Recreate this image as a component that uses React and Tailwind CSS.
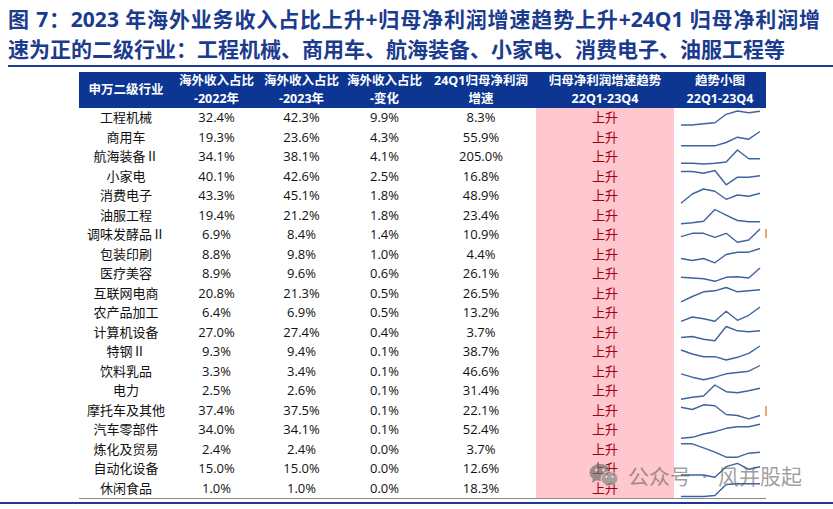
import React from "react";

const rows = [
  ["工程机械", "32.4%", "42.3%", "9.9%", "8.3%", [17, 17, 15.7, 14.7, 6.3, 3, 4.7, 3.3]],
  ["商用车", "19.3%", "23.6%", "4.3%", "55.9%", [17.8, 17.8, 17.8, 17.8, 14.5, 9.2, 11.2, 3.5]],
  ["航海装备Ⅱ", "34.1%", "38.1%", "4.1%", "205.0%", [16.3, 16.3, 17, 16.3, 15, 3, 11.7, 11.7]],
  ["小家电", "40.1%", "42.6%", "2.5%", "16.8%", [4.5, 4.5, 6.2, 3.5, 17.8, 10.2, 10.2, 8.8]],
  ["消费电子", "43.3%", "45.1%", "1.8%", "48.9%", [17.3, 8, 3, 5.3, 13.3, 9, 10.3, 7.3]],
  ["油服工程", "19.4%", "21.2%", "1.8%", "23.4%", [17.8, 16.8, 15.2, 3.5, 9.2, 14.5, 15.8, 15.8]],
  ["调味发酵品Ⅱ", "6.9%", "8.4%", "1.4%", "10.9%", [11.7, 8.3, 8.3, 12.3, 8.3, 17.3, 15, 4]],
  ["包装印刷", "8.8%", "9.8%", "1.0%", "4.4%", [13.5, 15.5, 13.5, 17.8, 9.5, 7.2, 7.2, 3.5]],
  ["医疗美容", "8.9%", "9.6%", "0.6%", "26.1%", [13.3, 14, 14.7, 17.3, 13.3, 12.7, 14, 4]],
  ["互联网电商", "20.8%", "21.3%", "0.5%", "26.5%", [17.8, 12.5, 7.8, 6.8, 3.5, 7.8, 6.8, 5.8]],
  ["农产品加工", "6.4%", "6.9%", "0.5%", "13.2%", [18.3, 14, 15.7, 18.3, 8.3, 17.3, 12.3, 4]],
  ["计算机设备", "27.0%", "27.4%", "0.4%", "3.7%", [14.5, 13.5, 16.2, 17.8, 3.5, 7.8, 8.8, 7.8]],
  ["特钢Ⅱ", "9.3%", "9.4%", "0.1%", "38.7%", [8, 12, 14.7, 14.7, 18, 15.3, 11.3, 4]],
  ["饮料乳品", "3.3%", "3.4%", "0.1%", "46.6%", [11.8, 15.2, 17.8, 15.2, 11.8, 10.5, 9.2, 3.5]],
  ["电力", "2.5%", "2.6%", "0.1%", "31.4%", [18.3, 16.3, 15, 4, 10.7, 11.7, 9.7, 7.3]],
  ["摩托车及其他", "37.4%", "37.5%", "0.1%", "22.1%", [6.2, 8.5, 3.8, 4.8, 13.5, 14.5, 17.8, 14.5]],
  ["汽车零部件", "34.0%", "34.1%", "0.1%", "52.4%", [18.3, 17.3, 14, 11.7, 8.3, 6.7, 6.7, 4.3]],
  ["炼化及贸易", "2.4%", "2.4%", "0.0%", "3.7%", [3.8, 3.8, 7.8, 12.2, 17.2, 17.2, 13.2, 12.2]],
  ["自动化设备", "15.0%", "15.0%", "0.0%", "12.6%", [16, 16, 16, 18.3, 7.7, 4.3, 10.3, 7.7]],
  ["休闲食品", "1.0%", "1.0%", "0.0%", "18.3%", [17.5, 17.5, 17.5, 16.5, 5.5, 4.8, 4.8, 4.8]],
];

function Spark({ ys }) {
  const pts = ys.map((y, i) => `${(7 + i * 11.29).toFixed(2)},${y}`).join(" ");
  return (
    <svg width="92" height="19.5" viewBox="0 0 92 19.5" className="block">
      <polyline points={pts} fill="none" stroke="#3d649f" strokeWidth="1.4" strokeLinejoin="round" />
    </svg>
  );
}

function WeChatIcon() {
  return (
    <svg width="30" height="24" viewBox="0 0 30 24">
      <ellipse cx="11" cy="9.5" rx="10.5" ry="8.5" fill="#6f6f6f" />
      <path d="M4 15 L3 20 L8.5 16.5 Z" fill="#6f6f6f" />
      <circle cx="7.3" cy="7" r="1.4" fill="#d9d9d9" />
      <circle cx="14.5" cy="7" r="1.4" fill="#d9d9d9" />
      <ellipse cx="20.5" cy="15.5" rx="8.5" ry="7" fill="#8a8a8a" stroke="#d9d9d9" strokeWidth="1" />
      <path d="M25 20.5 L27 23.5 L22 21.5 Z" fill="#8a8a8a" />
      <circle cx="17.5" cy="13.8" r="1.1" fill="#e6e6e6" />
      <circle cx="23.5" cy="13.8" r="1.1" fill="#e6e6e6" />
    </svg>
  );
}

const cols = "grid grid-cols-[94px_87px_83px_83px_110px_138px_92px]";

export default function App() {
  return (
    <div
      className="relative w-[833px] h-[509px] bg-white overflow-hidden"
      style={{ fontFamily: '"Open Sans", "Noto Sans CJK SC", sans-serif' }}
    >
      <div className="pt-[4px] pl-[8px] text-[#1b3b8e] font-bold text-[21px] leading-[30px]">
        <div className="w-[812px] [text-align-last:justify] whitespace-nowrap">
          图 7：2023 年海外业务收入占比上升+归母净利润增速趋势上升+24Q1 归母净利润增
        </div>
        <div className="whitespace-nowrap">
          速为正的二级行业：工程机械、商用车、航海装备、小家电、消费电子、油服工程等
        </div>
      </div>
      <div className="ml-[8px] mt-[1px] h-[2px] bg-[#1b3b8e]" />

      <div className="ml-[79px] mt-[5px] w-[687px]">
        <div className={`${cols} h-[36px] bg-[#0d3592] text-white font-bold text-[12.5px] leading-[18px]`}>
          <div className="flex items-center justify-center">申万二级行业</div>
          <div className="flex flex-col items-center justify-center"><span>海外收入占比</span><span>-2022年</span></div>
          <div className="flex flex-col items-center justify-center"><span>海外收入占比</span><span>-2023年</span></div>
          <div className="flex flex-col items-center justify-center"><span>海外收入占比</span><span>-变化</span></div>
          <div className="flex flex-col items-center justify-center"><span>24Q1归母净利润</span><span>增速</span></div>
          <div className="flex flex-col items-center justify-center"><span>归母净利润增速趋势</span><span>22Q1-23Q4</span></div>
          <div className="flex flex-col items-center justify-center"><span>趋势小图</span><span>22Q1-23Q4</span></div>
        </div>
        <div className="border-b border-[#8a8a8a] text-[13px] text-[#111]">
          {rows.map((r, i) => (
            <div key={i} className={`${cols} h-[19.5px] leading-[19.5px]`}>
              <div className="text-center whitespace-nowrap">{r[0]}</div>
              <div className="text-center">{r[1]}</div>
              <div className="text-center">{r[2]}</div>
              <div className="text-center">{r[3]}</div>
              <div className="text-center">{r[4]}</div>
              <div className="text-center bg-[#ffc7ce] text-[#a00010]">上升</div>
              <div className="relative">
                <Spark ys={r[5]} />
                {i === 6 && <span className="absolute left-[91px] top-[4px] w-[1.5px] h-[9px] bg-[#e8a86b]" />}
                {i === 15 && <span className="absolute left-[91px] top-[5px] w-[1.5px] h-[10px] bg-[#e8a86b]" />}
              </div>
            </div>
          ))}
        </div>
      </div>
      <div className="mt-[3px] h-[2px] bg-[#1b3b8e]" />

      <div
        className="absolute left-[589px] top-[461px] flex items-center text-[21px] leading-[28px] text-[#5e5e5e]/60"
        style={{ fontFamily: '"Noto Sans CJK SC", sans-serif' }}
      >
        <div className="opacity-70 mr-[9px]"><WeChatIcon /></div>
        <span>公众号</span>
        <span className="w-[27px] text-center text-[14px]">·</span>
        <span>风并股起</span>
      </div>
    </div>
  );
}
